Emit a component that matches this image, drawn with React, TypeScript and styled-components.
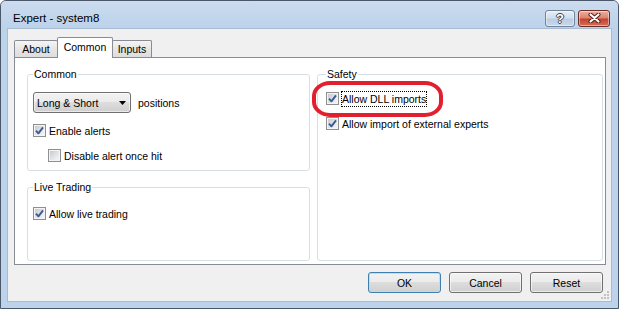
import React from "react";
import styled, { createGlobalStyle } from "styled-components";

const GlobalStyle = createGlobalStyle`
  body {
    margin: 0;
    background: #ffffff;
    font-family: "Liberation Sans", Arial, sans-serif;
  }
`;

interface CheckOptionProps {
  label: string;
  checked?: boolean;
  focused?: boolean;
  top: number;
  indent?: number;
}

const CheckOption: React.FC<CheckOptionProps> = ({
  label,
  checked,
  focused,
  top,
  indent = 0
}) => {
  return (
    <StCheckRow $top={top} $indent={indent}>
      <StCheckBox>
        {checked && (
          <svg width="9" height="9" viewBox="0 0 9 9">
            <path
              d="M1 4.6 L3.4 7.3 L8 1.3"
              fill="none"
              stroke="#3c5a96"
              strokeWidth="1.9"
              strokeLinejoin="round"
            />
          </svg>
        )}
      </StCheckBox>
      <StCheckText $focused={focused}>{label}</StCheckText>
    </StCheckRow>
  );
};

const App: React.FC = () => {
  return (
    <>
      <GlobalStyle />
      <StWindow>
        <StTitleBar>
          <StTitle>Expert - system8</StTitle>
          <StCaptionButtons>
            <StCaptionButton $variant="help">
              <StHelpGlyph>?</StHelpGlyph>
            </StCaptionButton>
            <StCaptionButton $variant="close">
              <svg width="13" height="10" viewBox="0 0 13 10">
                <path
                  d="M2.5 1.5 L10.5 8.5 M10.5 1.5 L2.5 8.5"
                  stroke="#4a1a14"
                  strokeWidth="4"
                  strokeLinecap="round"
                />
                <path
                  d="M2.5 1.5 L10.5 8.5 M10.5 1.5 L2.5 8.5"
                  stroke="#ffffff"
                  strokeWidth="2.2"
                  strokeLinecap="round"
                />
              </svg>
            </StCaptionButton>
          </StCaptionButtons>
        </StTitleBar>

        <StClient>
          <StTabStrip>
            <StTab $width={44}>About</StTab>
            <StTab $width={56} $active>
              Common
            </StTab>
            <StTab $width={40}>Inputs</StTab>
          </StTabStrip>

          <StPanel>
            <StColumn>
              <StGroup $height={104}>
                <StLegend>Common</StLegend>
                <StInlineRow>
                  <StSelect>
                    <span>Long &amp; Short</span>
                    <StSelectArrow width="7" height="4" viewBox="0 0 7 4">
                      <path d="M0 0 H7 L3.5 4 Z" fill="#000000" />
                    </StSelectArrow>
                  </StSelect>
                  <span>positions</span>
                </StInlineRow>
                <CheckOption label="Enable alerts" checked top={11} />
                <CheckOption label="Disable alert once hit" top={12} indent={15} />
              </StGroup>

              <StGroup $height={81}>
                <StLegend>Live Trading</StLegend>
                <CheckOption label="Allow live trading" checked top={13} />
              </StGroup>
            </StColumn>

            <StGroup $inset={3}>
              <StLegend>Safety</StLegend>
              <StHighlightWrap>
                <CheckOption label="Allow DLL imports" checked focused top={11} />
                <StHighlight />
              </StHighlightWrap>
              <CheckOption label="Allow import of external experts" checked top={12} />
            </StGroup>
          </StPanel>

          <StButtonBar>
            <StButton $default>OK</StButton>
            <StButton>Cancel</StButton>
            <StButton>Reset</StButton>
          </StButtonBar>

          <StGrip width="8" height="8" viewBox="0 0 8 8">
            <rect x="6" y="0" width="2" height="2" fill="#c3c3c3" />
            <rect x="3" y="3" width="2" height="2" fill="#c3c3c3" />
            <rect x="6" y="3" width="2" height="2" fill="#c3c3c3" />
            <rect x="0" y="6" width="2" height="2" fill="#c3c3c3" />
            <rect x="3" y="6" width="2" height="2" fill="#c3c3c3" />
            <rect x="6" y="6" width="2" height="2" fill="#c3c3c3" />
          </StGrip>
        </StClient>
      </StWindow>
    </>
  );
};

export default App;

const StWindow = styled.div`
  width: 619px;
  height: 309px;
  box-sizing: border-box;
  display: flex;
  flex-direction: column;
  border: 1px solid #4a5869;
  border-radius: 6px 6px 0 0;
  background: #bcd3eb;
  overflow: hidden;
`;

const StTitleBar = styled.div`
  height: 28px;
  flex-shrink: 0;
  box-sizing: border-box;
  display: flex;
  align-items: center;
  padding: 7px 8px 1px 12px;
  background: linear-gradient(180deg, #cddcef 0%, #c2d6ec 55%, #bcd3eb 100%);
`;

const StTitle = styled.span`
  flex: 1;
  font-size: 11.5px;
  color: #000000;
`;

const StCaptionButtons = styled.div`
  display: flex;
  gap: 3px;
`;

const StCaptionButton = styled.button<{ $variant: "help" | "close" }>`
  width: ${(p) => (p.$variant === "close" ? 32 : 30)}px;
  height: 17px;
  padding: 0;
  display: flex;
  align-items: center;
  justify-content: center;
  border: 1px solid ${(p) => (p.$variant === "close" ? "#6e2c24" : "#71849a")};
  border-radius: 3px;
  background: ${(p) =>
    p.$variant === "close"
      ? "linear-gradient(180deg, #eab0a3 0%, #dd8470 45%, #c4432f 55%, #d5705a 100%)"
      : "linear-gradient(180deg, #e6eef8 0%, #d2dfee 45%, #bccde2 55%, #c9d8eb 100%)"};
  box-shadow: inset 0 0 0 1px rgba(255, 255, 255, 0.45);
`;

const StHelpGlyph = styled.span`
  font-family: "Liberation Sans", Arial, sans-serif;
  font-size: 13px;
  font-weight: bold;
  line-height: 13px;
  color: #ffffff;
  text-shadow: 1px 0 0 #33455c, -1px 0 0 #33455c, 0 1px 0 #33455c, 0 -1px 0 #33455c;
`;

const StClient = styled.div`
  flex: 1;
  margin: 0 7px 7px;
  position: relative;
  display: flex;
  flex-direction: column;
  background: #f0f0f0;
  box-shadow: 0 0 0 1px #a7bbd2;
  font-size: 10.5px;
  color: #000000;
`;

const StTabStrip = styled.div`
  height: 28px;
  flex-shrink: 0;
  display: flex;
  align-items: flex-end;
  padding-left: 6px;
`;

const StTab = styled.div<{ $width: number; $active?: boolean }>`
  width: ${(p) => p.$width}px;
  height: ${(p) => (p.$active ? 21 : 17)}px;
  box-sizing: border-box;
  display: flex;
  align-items: center;
  justify-content: center;
  padding-bottom: ${(p) => (p.$active ? 3 : 0)}px;
  margin-bottom: ${(p) => (p.$active ? -1 : 0)}px;
  margin-right: -1px;
  position: relative;
  z-index: ${(p) => (p.$active ? 1 : 0)};
  border: 1px solid #898c95;
  border-bottom: none;
  border-radius: 2px 2px 0 0;
  background: ${(p) =>
    p.$active ? "#ffffff" : "linear-gradient(180deg, #f5f5f5 0%, #e6e6e6 50%, #dddddd 100%)"};
`;

const StPanel = styled.div`
  height: 208px;
  flex-shrink: 0;
  box-sizing: border-box;
  margin: 0 5px 0 6px;
  padding: 9px 2px 3px 12px;
  display: flex;
  gap: 7px;
  border: 1px solid #898c95;
  background: #ffffff;
`;

const StColumn = styled.div`
  width: 283px;
  flex-shrink: 0;
  display: flex;
  flex-direction: column;
  gap: 9px;
`;

const StGroup = styled.fieldset<{ $height?: number; $inset?: number }>`
  margin: 0;
  min-width: 0;
  box-sizing: border-box;
  ${(p) => (p.$height ? `height: ${p.$height}px;` : "flex: 1;")}
  display: flex;
  flex-direction: column;
  align-items: flex-start;
  padding: 0 5px 0 ${(p) => 5 + (p.$inset ?? 0)}px;
  border: 1px solid #d5dfe5;
  border-radius: 3px;
`;

const StLegend = styled.legend`
  padding: 0 1px;
  font-size: 10.5px;
  line-height: 14px;
`;

const StInlineRow = styled.div`
  display: flex;
  align-items: center;
  gap: 7px;
  margin-top: 11px;
`;

const StSelect = styled.div`
  width: 98px;
  height: 21px;
  box-sizing: border-box;
  display: flex;
  align-items: center;
  justify-content: space-between;
  padding: 0 4px 0 3px;
  border: 1px solid #707070;
  border-radius: 3px;
  background: linear-gradient(180deg, #f2f2f2 0%, #ebebeb 50%, #dddddd 50%, #cfcfcf 100%);
  box-shadow: inset 0 0 0 1px rgba(255, 255, 255, 0.55);
`;

const StSelectArrow = styled.svg`
  flex-shrink: 0;
`;

const StCheckRow = styled.label<{ $top: number; $indent: number }>`
  height: 13px;
  display: flex;
  align-items: center;
  gap: 2px;
  margin-top: ${(p) => p.$top}px;
  margin-left: ${(p) => p.$indent}px;
  white-space: nowrap;
`;

const StCheckBox = styled.span`
  width: 13px;
  height: 13px;
  flex-shrink: 0;
  box-sizing: border-box;
  display: flex;
  align-items: center;
  justify-content: center;
  border: 1px solid #8e8f8f;
  background: linear-gradient(135deg, #c0c4ca 0%, #e3e5e7 55%, #f8f8f8 100%);
  box-shadow: inset 0 0 0 1px #f4f4f4;
`;

const StCheckText = styled.span<{ $focused?: boolean }>`
  line-height: 14px;
  border: 1px ${(p) => (p.$focused ? "dotted #000000" : "solid transparent")};
`;

const StHighlightWrap = styled.div`
  position: relative;
`;

const StHighlight = styled.div`
  position: absolute;
  left: -14px;
  top: 0;
  width: 131px;
  height: 36px;
  box-sizing: border-box;
  border: 4.5px solid #e11f2e;
  border-radius: 18px / 15px;
  pointer-events: none;
`;

const StButtonBar = styled.div`
  display: flex;
  justify-content: flex-end;
  gap: 8px;
  padding: 7px 8px 0 0;
`;

const StButton = styled.button<{ $default?: boolean }>`
  width: 73px;
  height: 21px;
  padding: 0;
  font-family: "Liberation Sans", Arial, sans-serif;
  font-size: 10.5px;
  color: #000000;
  border: 1px solid ${(p) => (p.$default ? "#3c7fb1" : "#707070")};
  border-radius: 3px;
  background: linear-gradient(180deg, #f2f2f2 0%, #ebebeb 50%, #dddddd 50%, #cfcfcf 100%);
  box-shadow: inset 0 0 0 1px
    ${(p) => (p.$default ? "rgba(180, 222, 246, 0.9)" : "rgba(255, 255, 255, 0.6)")};
`;

const StGrip = styled.svg`
  position: absolute;
  right: 2px;
  bottom: 2px;
`;
